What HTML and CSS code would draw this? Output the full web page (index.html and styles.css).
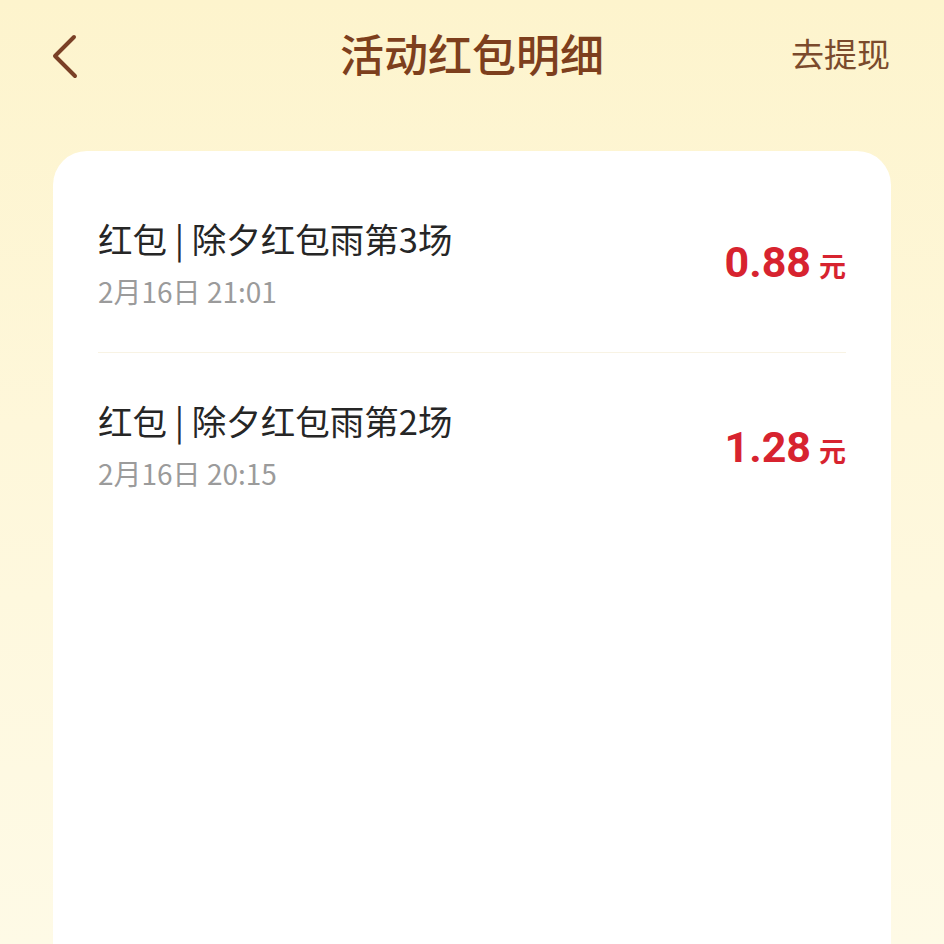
FILE: index.html
```html
<!DOCTYPE html>
<html lang="zh-CN">
<head>
  <meta charset="UTF-8">
  <meta name="viewport" content="width=device-width, initial-scale=1.0">
  <title>活动红包明细</title>
  <link rel="stylesheet" href="styles.css">
</head>
<body>
  <div class="page">
    <div class="nav-bar">
      <a class="back-btn" href="#">
        <svg width="30" height="48" viewBox="0 0 30 48">
          <path d="M22 4 L3 23 L23 43" fill="none" stroke="#7a4026" stroke-width="4" stroke-linecap="round" stroke-linejoin="round"/>
        </svg>
      </a>
      <h1 class="nav-title">活动红包明细</h1>
      <a class="nav-action" href="#">去提现</a>
    </div>

    <div class="card">
      <div class="record">
        <div class="record-info">
          <div class="record-title">红包 | 除夕红包雨第3场</div>
          <div class="record-time">2月16日 21:01</div>
        </div>
        <div class="record-amount"><span class="num">0.88</span><span class="unit">元</span></div>
      </div>
      <div class="record">
        <div class="record-info">
          <div class="record-title">红包 | 除夕红包雨第2场</div>
          <div class="record-time">2月16日 20:15</div>
        </div>
        <div class="record-amount"><span class="num">1.28</span><span class="unit">元</span></div>
      </div>
    </div>
  </div>
</body>
</html>
```

FILE: styles.css
```css
* {
  box-sizing: border-box;
  margin: 0;
  padding: 0;
}

html, body {
  height: 100%;
}

body {
  font-family: "Noto Sans CJK SC", "Noto Sans", sans-serif;
  background: linear-gradient(180deg, #fdf4cd 0%, #fef7da 45%, #fefae6 100%);
  overflow: hidden;
}

.page {
  height: 944px;
  display: flex;
  flex-direction: column;
}

.nav-bar {
  height: 108px;
  padding: 0 52px;
  display: flex;
  align-items: center;
  justify-content: space-between;
  position: relative;
}

.back-btn {
  display: flex;
  width: 40px;
  margin-top: 6px;
}

/* title sits centered over the whole bar */
.nav-title {
  position: absolute;
  left: 0;
  right: 0;
  text-align: center;
  font-size: 44px;
  font-weight: 500;
  color: #7d3f1d;
  pointer-events: none;
  margin-top: -2px;
}

.nav-action {
  font-size: 33px;
  color: #7a4a2c;
  text-decoration: none;
  margin-right: 2px;
  margin-top: -2px;
}

.card {
  margin: 43px 53px 0;
  flex: 1;
  background-color: #fff;
  border-radius: 34px 34px 0 0;
  padding: 0 45px;
}

.record {
  display: flex;
  align-items: center;
  justify-content: space-between;
  height: 183px;
  border-bottom: 1px solid #f8f3e4;
}

.record:first-child {
  height: 202px;
  padding-top: 22px;
}

.record:first-child .record-amount {
  margin-top: -2px;
}

.record:last-child {
  border-bottom: none;
}

.record-title {
  font-size: 34.5px;
  color: #262626;
  line-height: 46px;
}

.record-time {
  font-size: 28px;
  color: #9b9b9b;
  line-height: 40px;
  margin-top: 10px;
}

.record-amount {
  color: #d7232f;
  display: flex;
  align-items: baseline;
  margin-top: 4px;
}

.record-amount .num {
  font-family: Roboto, "Noto Sans", sans-serif;
  font-size: 43px;
  font-weight: 700;
}

.record-amount .unit {
  font-size: 27px;
  font-weight: 700;
  margin-left: 8px;
}
```
